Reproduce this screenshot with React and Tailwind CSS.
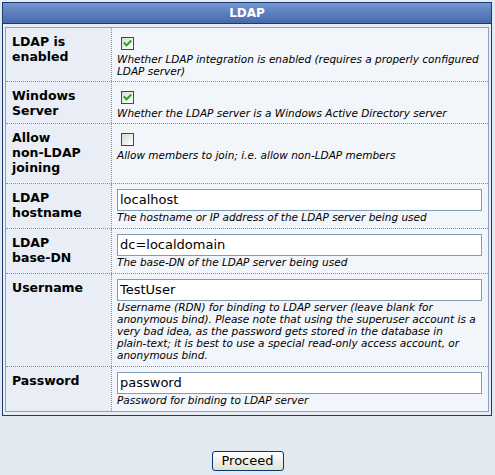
import React from "react";

function Check({ checked }) {
  return (
    <span className="block w-[13px] h-[13px] border border-[#1c5180] bg-gradient-to-br from-[#dcdcd5] to-white relative">
      {checked && (
        <svg viewBox="0 0 11 11" className="absolute left-0 top-0 w-[11px] h-[11px]">
          <path d="M2.5 5.2 L4.5 7.4 L8.6 3.2" fill="none" stroke="#21a121" strokeWidth="1.9" strokeLinecap="square" />
        </svg>
      )}
    </span>
  );
}

function Row({ label, h, last, children }) {
  return (
    <div className={`flex ${h} ${last ? "" : "border-b border-dotted border-[#7c95bf]"}`}>
      <div className="w-[106px] shrink-0 border-r border-dotted border-[#7c95bf] bg-[#e9eef6] pl-[6px] pr-[2px] pt-[6px] font-bold text-[12.5px] leading-[15px] text-black">
        {label}
      </div>
      <div className="flex-1 bg-[#f2f5fa] pl-[5px] pr-[6px]">{children}</div>
    </div>
  );
}

function Desc({ children }) {
  return <div className="italic text-[10.5px] leading-[12px] text-black">{children}</div>;
}

function CheckCell({ checked, desc }) {
  return (
    <div>
      <div className="pt-[9px] pl-[4px] pb-[3px]">
        <Check checked={checked} />
      </div>
      <Desc>{desc}</Desc>
    </div>
  );
}

function InputCell({ value, desc }) {
  return (
    <div className="pt-[5px]">
      <div className="w-[365px] h-[22px] border border-[#7f9db9] bg-white pl-[2px] text-[13px] leading-[20px] text-black">
        {value}
      </div>
      <Desc>{desc}</Desc>
    </div>
  );
}

export default function App() {
  return (
    <div className="min-h-[475px] bg-[#e3e9f1] pt-[2px] font-['DejaVu_Sans',Verdana,sans-serif]">
      <div className="ml-[2px] w-[490px] border border-[#1a3a72] bg-[#e8edf5]">
        <div className="h-[21px] border-b border-[#1a3a72] bg-gradient-to-b from-[#7497d1] to-[#4569ab] text-center text-white font-bold text-[12px] leading-[20px]">
          LDAP
        </div>
        <div className="px-[2px] py-[3px]">
          <div className="border border-[#8da2c2]">
            <Row label="LDAP is enabled" h="h-[54px]">
              <CheckCell checked desc="Whether LDAP integration is enabled (requires a properly configured LDAP server)" />
            </Row>
            <Row label="Windows Server" h="h-[42px]">
              <CheckCell checked desc="Whether the LDAP server is a Windows Active Directory server" />
            </Row>
            <Row
              label={
                <>
                  Allow <span className="whitespace-nowrap">non-LDAP</span> joining
                </>
              }
              h="h-[60px]"
            >
              <CheckCell
                checked={false}
                desc={
                  <>
                    Allow members to join; i.e. allow <span className="whitespace-nowrap">non-LDAP</span> members
                  </>
                }
              />
            </Row>
            <Row label="LDAP hostname" h="h-[45px]">
              <InputCell value="localhost" desc="The hostname or IP address of the LDAP server being used" />
            </Row>
            <Row
              label={
                <>
                  LDAP <span className="whitespace-nowrap">base-DN</span>
                </>
              }
              h="h-[45px]"
            >
              <InputCell
                value="dc=localdomain"
                desc={
                  <>
                    The <span className="whitespace-nowrap">base-DN</span> of the LDAP server being used
                  </>
                }
              />
            </Row>
            <Row label="Username" h="h-[93px]">
              <InputCell
                value="TestUser"
                desc={
                  <>
                    Username (RDN) for binding to LDAP server (leave blank for anonymous bind). Please note that using the
                    superuser account is a very bad idea, as the password gets stored in the database in{" "}
                    <span className="whitespace-nowrap">plain-text;</span> it is best to use a special{" "}
                    <span className="whitespace-nowrap">read-only</span> access account, or anonymous bind.
                  </>
                }
              />
            </Row>
            <Row label="Password" h="h-[44px]" last>
              <InputCell value="password" desc="Password for binding to LDAP server" />
            </Row>
          </div>
        </div>
      </div>
      <div className="mt-[35px] flex justify-center">
        <button className="w-[72px] h-[20px] rounded-[3px] border border-[#003c74] bg-gradient-to-b from-white to-[#e4e1d2] text-[13px] leading-[18px] text-black font-['DejaVu_Sans',Verdana,sans-serif]">
          Proceed
        </button>
      </div>
    </div>
  );
}
